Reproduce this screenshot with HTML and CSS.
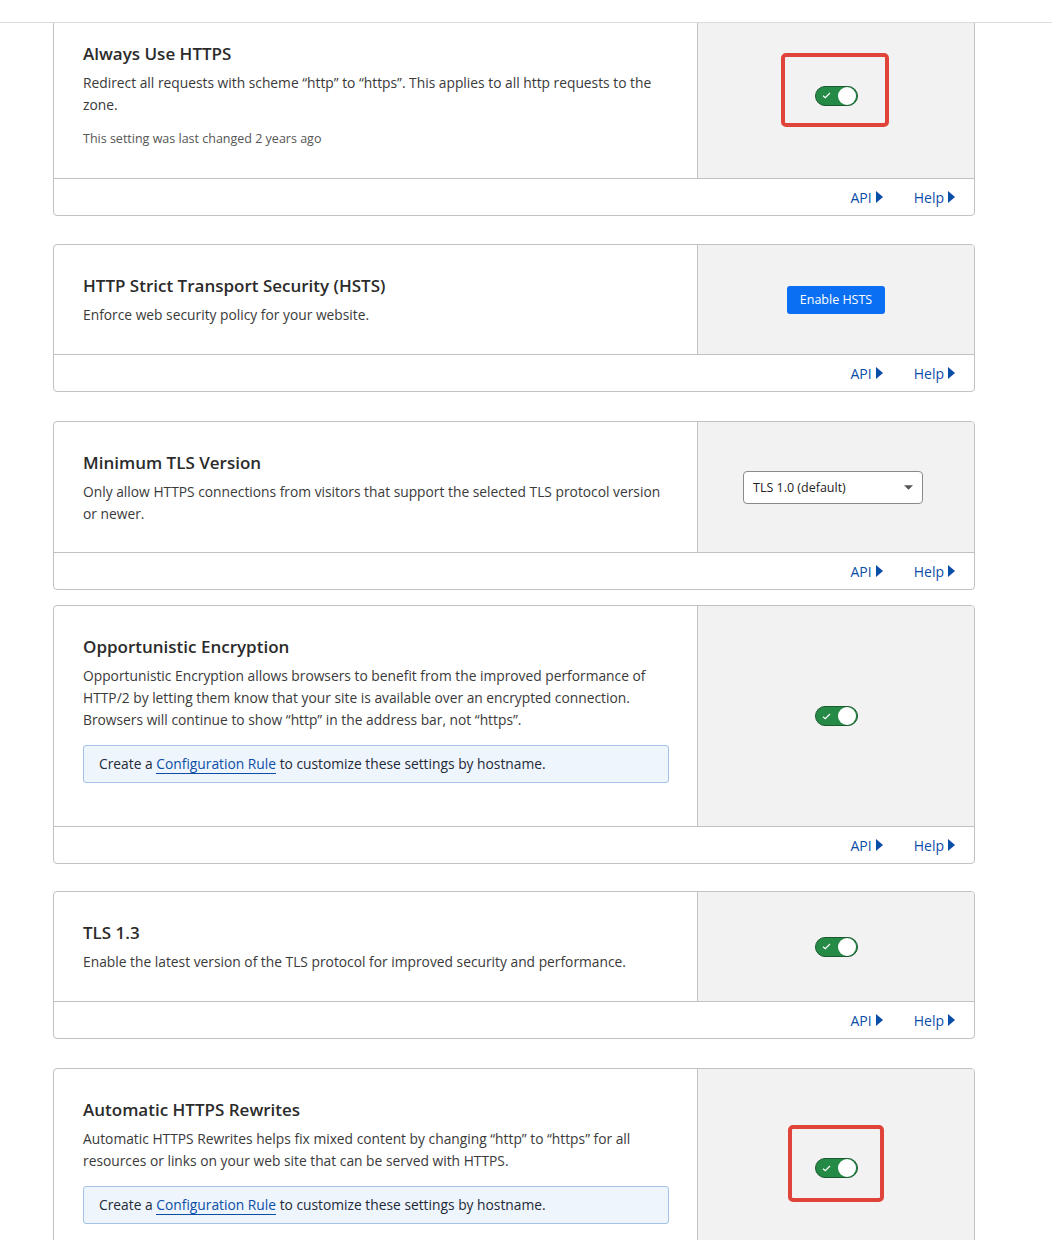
FILE: index.html
```html
<!DOCTYPE html>
<html lang="en">
<head>
    <meta charset="UTF-8">
    <meta name="viewport" content="width=device-width, initial-scale=1.0">
    <title>Edge Certificates</title>
    <link rel="stylesheet" href="styles.css">
</head>
<body>
    <div class="topbar"></div>
    <div class="page">

        <div class="card">
            <div class="card-body">
                <div class="card-main card-main-short">
                    <h3>Always Use HTTPS</h3>
                    <p>Redirect all requests with scheme “http” to “https”. This applies to all http requests to the zone.</p>
                    <p class="meta">This setting was last changed 2 years ago</p>
                </div>
                <div class="card-side">
                    <span class="marker marker-one"></span>
                    <span class="toggle"><svg class="tick" viewBox="0 0 10 8" width="9" height="7"><path d="M1 4.2 3.6 6.6 9 1.2" fill="none" stroke="#fff" stroke-width="1.4"/></svg><span class="knob"></span></span>
                </div>
            </div>
            <div class="card-foot">
                <a href="#">API<svg class="arrow" viewBox="0 0 7 12" width="7" height="12"><path d="M0 0 7 6 0 12Z"/></svg></a>
                <a href="#">Help<svg class="arrow" viewBox="0 0 7 12" width="7" height="12"><path d="M0 0 7 6 0 12Z"/></svg></a>
            </div>
        </div>

        <div class="card card-loose">
            <div class="card-body">
                <div class="card-main card-main-short">
                    <h3>HTTP Strict Transport Security (HSTS)</h3>
                    <p>Enforce web security policy for your website.</p>
                </div>
                <div class="card-side">
                    <button class="btn-primary">Enable HSTS</button>
                </div>
            </div>
            <div class="card-foot">
                <a href="#">API<svg class="arrow" viewBox="0 0 7 12" width="7" height="12"><path d="M0 0 7 6 0 12Z"/></svg></a>
                <a href="#">Help<svg class="arrow" viewBox="0 0 7 12" width="7" height="12"><path d="M0 0 7 6 0 12Z"/></svg></a>
            </div>
        </div>

        <div class="card card-tight">
            <div class="card-body">
                <div class="card-main">
                    <h3>Minimum TLS Version</h3>
                    <p>Only allow HTTPS connections from visitors that support the selected TLS protocol version or newer.</p>
                </div>
                <div class="card-side">
                    <div class="select">
                        <span>TLS 1.0 (default)</span>
                        <svg viewBox="0 0 10 5" width="9" height="5"><path d="M0 0 10 0 5 5Z" fill="#555"/></svg>
                    </div>
                </div>
            </div>
            <div class="card-foot">
                <a href="#">API<svg class="arrow" viewBox="0 0 7 12" width="7" height="12"><path d="M0 0 7 6 0 12Z"/></svg></a>
                <a href="#">Help<svg class="arrow" viewBox="0 0 7 12" width="7" height="12"><path d="M0 0 7 6 0 12Z"/></svg></a>
            </div>
        </div>

        <div class="card card-snug">
            <div class="card-body">
                <div class="card-main card-main-box">
                    <h3>Opportunistic Encryption</h3>
                    <p>Opportunistic Encryption allows browsers to benefit from the improved performance of HTTP/2 by letting them know that your site is available over an encrypted connection. Browsers will continue to show “http” in the address bar, not “https”.</p>
                    <div class="info">Create a <a href="#">Configuration Rule</a> to customize these settings by hostname.</div>
                </div>
                <div class="card-side">
                    <span class="toggle"><svg class="tick" viewBox="0 0 10 8" width="9" height="7"><path d="M1 4.2 3.6 6.6 9 1.2" fill="none" stroke="#fff" stroke-width="1.4"/></svg><span class="knob"></span></span>
                </div>
            </div>
            <div class="card-foot">
                <a href="#">API<svg class="arrow" viewBox="0 0 7 12" width="7" height="12"><path d="M0 0 7 6 0 12Z"/></svg></a>
                <a href="#">Help<svg class="arrow" viewBox="0 0 7 12" width="7" height="12"><path d="M0 0 7 6 0 12Z"/></svg></a>
            </div>
        </div>

        <div class="card card-loose">
            <div class="card-body">
                <div class="card-main card-main-short">
                    <h3>TLS 1.3</h3>
                    <p>Enable the latest version of the TLS protocol for improved security and performance.</p>
                </div>
                <div class="card-side">
                    <span class="toggle"><svg class="tick" viewBox="0 0 10 8" width="9" height="7"><path d="M1 4.2 3.6 6.6 9 1.2" fill="none" stroke="#fff" stroke-width="1.4"/></svg><span class="knob"></span></span>
                </div>
            </div>
            <div class="card-foot">
                <a href="#">API<svg class="arrow" viewBox="0 0 7 12" width="7" height="12"><path d="M0 0 7 6 0 12Z"/></svg></a>
                <a href="#">Help<svg class="arrow" viewBox="0 0 7 12" width="7" height="12"><path d="M0 0 7 6 0 12Z"/></svg></a>
            </div>
        </div>

        <div class="card">
            <div class="card-body">
                <div class="card-main card-main-box">
                    <h3>Automatic HTTPS Rewrites</h3>
                    <p>Automatic HTTPS Rewrites helps fix mixed content by changing “http” to “https” for all resources or links on your web site that can be served with HTTPS.</p>
                    <div class="info">Create a <a href="#">Configuration Rule</a> to customize these settings by hostname.</div>
                </div>
                <div class="card-side">
                    <span class="marker marker-two"></span>
                    <span class="toggle"><svg class="tick" viewBox="0 0 10 8" width="9" height="7"><path d="M1 4.2 3.6 6.6 9 1.2" fill="none" stroke="#fff" stroke-width="1.4"/></svg><span class="knob"></span></span>
                </div>
            </div>
            <div class="card-foot">
                <a href="#">API<svg class="arrow" viewBox="0 0 7 12" width="7" height="12"><path d="M0 0 7 6 0 12Z"/></svg></a>
                <a href="#">Help<svg class="arrow" viewBox="0 0 7 12" width="7" height="12"><path d="M0 0 7 6 0 12Z"/></svg></a>
            </div>
        </div>

    </div>
</body>
</html>
```

FILE: styles.css
```css
body {
    font-family: "Open Sans", Arial, sans-serif;
    background-color: #ffffff;
    color: #3a3a3a;
    margin: 0;
}
.topbar {
    height: 22px;
    border-bottom: 1px solid #dcdcdc;
    position: relative;
    z-index: 2;
    background: #fff;
}
.page {
    width: 922px;
    margin-left: 53px;
    margin-top: -11px;
}
.card {
    border: 1px solid #c2c2c2;
    border-radius: 4px;
    margin-bottom: 28px;
    overflow: hidden;
}
.card-loose {
    margin-bottom: 29px;
}
.card-snug {
    margin-bottom: 27px;
}
.card-tight {
    margin-bottom: 15px;
}
.card-body {
    display: flex;
}
.card-main {
    flex: 1;
    padding: 29px 28px 27px 29px;
}
.card-main-short {
    padding-bottom: 28px;
}
.card-main-box {
    padding-bottom: 43px;
}
.card-main h3 {
    margin: 0 0 6px;
    font-size: 17px;
    font-weight: 600;
    line-height: 24px;
    color: #2b2b2b;
}
.card-main p {
    margin: 0;
    font-size: 13.8px;
    line-height: 22px;
}
.card-main .meta {
    margin-top: 12px;
    font-size: 12.5px;
    color: #555;
}
.card-side {
    width: 276px;
    background-color: #f2f2f2;
    border-left: 1px solid #c2c2c2;
    display: flex;
    align-items: center;
    justify-content: center;
    position: relative;
}
.toggle {
    box-sizing: border-box;
    width: 43px;
    height: 20px;
    border: 1px solid #1b5a2e;
    border-radius: 10px;
    background-color: #258a46;
    display: flex;
    align-items: center;
    justify-content: space-between;
    padding: 0 1px 0 6px;
    position: relative;
    z-index: 1;
}
.tick {
    display: block;
}
.knob {
    width: 18px;
    height: 18px;
    border-radius: 50%;
    background-color: #fff;
}
.marker {
    position: absolute;
    border: 4px solid #e0433a;
    border-radius: 5px;
}
.marker-one {
    left: 83px;
    top: 40px;
    width: 100px;
    height: 66px;
}
.marker-two {
    left: 90px;
    top: 56px;
    width: 88px;
    height: 69px;
}
.btn-primary {
    box-sizing: border-box;
    background-color: #0a6ff2;
    color: #fff;
    border: none;
    border-radius: 3px;
    font-family: inherit;
    font-size: 12.5px;
    white-space: nowrap;
    padding: 0;
    height: 28px;
    width: 98px;
}
.select {
    box-sizing: border-box;
    width: 180px;
    height: 33px;
    margin-right: 6px;
    background: #fff;
    border: 1px solid #8a8a8a;
    border-radius: 4px;
    display: flex;
    align-items: center;
    justify-content: space-between;
    padding: 0 9px;
    font-size: 12.5px;
    color: #222;
}
.info {
    margin-top: 14px;
    background-color: #eef5fd;
    border: 1px solid #a3c2e6;
    border-radius: 3px;
    padding: 7px 15px 8px;
    font-size: 13.8px;
    line-height: 21px;
    color: #1f2a37;
}
.info a {
    color: #0b4ea8;
    text-decoration: none;
    border-bottom: 1px solid #0b4ea8;
}
.card-foot {
    border-top: 1px solid #c2c2c2;
    height: 36px;
    display: flex;
    justify-content: flex-end;
    align-items: center;
    gap: 31px;
    padding-right: 19px;
}
.card-foot a {
    color: #0b4ea8;
    text-decoration: none;
    font-size: 14px;
    display: flex;
    align-items: center;
    gap: 4px;
}
.arrow {
    fill: #0b4ea8;
}
```
